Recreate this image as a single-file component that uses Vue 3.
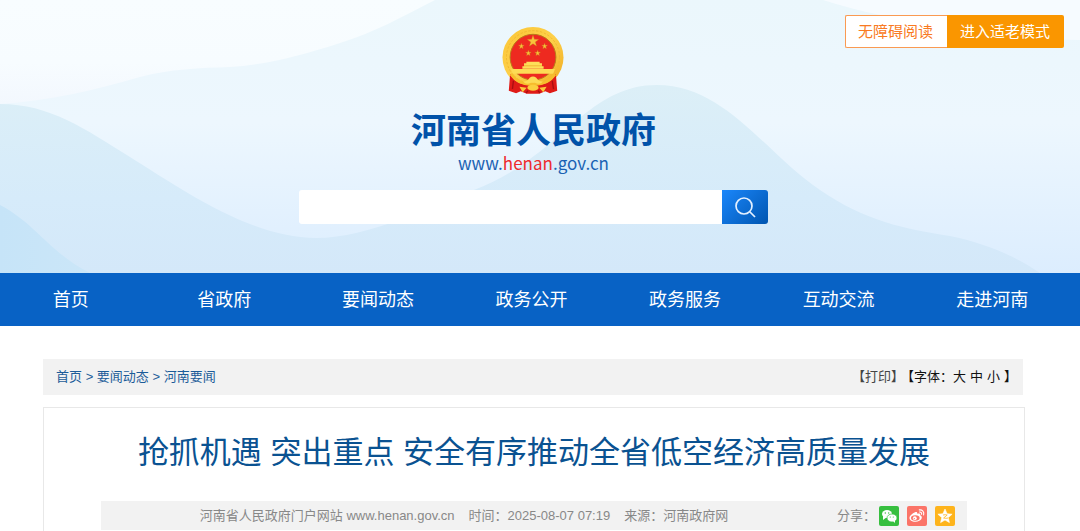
<template>
  <div class="page">
    <header class="hero">
      <svg class="waves" viewBox="0 0 1080 273" preserveAspectRatio="none" aria-hidden="true">
        <defs>
          <linearGradient id="sky" x1="0" y1="0" x2="0" y2="1">
            <stop offset="0" stop-color="#ebf7fc" />
            <stop offset="0.45" stop-color="#edf7fe" />
            <stop offset="1" stop-color="#dcedfe" />
          </linearGradient>
          <linearGradient id="mist" x1="0" y1="0" x2="0" y2="1">
            <stop offset="0" stop-color="#f8fdff" />
            <stop offset="0.6" stop-color="#f7fcff" />
            <stop offset="1" stop-color="#f3f8fe" />
          </linearGradient>
          <linearGradient id="hill" x1="0" y1="0" x2="0" y2="1">
            <stop offset="0" stop-color="#dceff7" />
            <stop offset="0.6" stop-color="#d6ebfa" />
            <stop offset="1" stop-color="#d4e8f9" />
          </linearGradient>
          <linearGradient id="corner" x1="0" y1="0" x2="1" y2="0">
            <stop offset="0" stop-color="#c6e4f8" />
            <stop offset="1" stop-color="#cbe6f8" />
          </linearGradient>
        </defs>
        <rect width="1080" height="273" fill="url(#sky)" />
        <path d="M0 0H435C400 18 375 32 340 43C300 56 265 65 230 67C200 68 170 69 140 77C95 90 50 101 0 104Z" fill="url(#mist)" />
        <path d="M823 0C860 12 900 20 950 26C1000 32 1040 40 1080 40V0Z" fill="#f6fbff" />
        <path d="M0 104C50 104 85 129 130 157C180 188 250 238 316 238C370 238 430 206 474 190C560 158 585 85 657 85C725 85 765 153 820 190C865 221 905 229 950 236C985 243 1015 256 1040 273H0Z" fill="url(#hill)" />
        <path d="M0 205C35 223 50 253 90 273H0Z" fill="url(#corner)" />
      </svg>

      <div class="modes">
        <button type="button" class="mode mode-plain">无障碍阅读</button>
        <button type="button" class="mode mode-elder">进入适老模式</button>
      </div>

      <div class="brand">
        <svg class="emblem" viewBox="0 0 186 202" aria-hidden="true">
          <defs>
            <linearGradient id="gold" x1="0" y1="0" x2="1" y2="1">
              <stop offset="0" stop-color="#fbc636" />
              <stop offset="0.5" stop-color="#fdd04a" />
              <stop offset="1" stop-color="#efa91f" />
            </linearGradient>
          </defs>
          <circle cx="93" cy="92" r="92" fill="url(#gold)" />
          <circle cx="93" cy="91" r="80" fill="none" stroke="#f0b72f" stroke-width="3" stroke-dasharray="7 5" />
          <circle cx="93" cy="91" r="69" fill="#ee2a20" stroke="#b97a18" stroke-width="3" />
          <polygon v-for="(s, i) in stars" :key="i" :points="starPoints(s)" fill="#f8c33b" stroke="#c8891e" stroke-width="1" />
          <path d="M66 109h7v-4h40v4h7v9h5v8H61v-8h5z" fill="#fddf59" />
          <path d="M66 117h54" stroke="#e9a622" stroke-width="2" />
          <path d="M27 127h132l-5 14H32z" fill="#fddb55" />
          <path d="M24 142c18 32 42 33 69 33s51-1 69-33l4 50-22 8-14-6-18 7H74l-18-7-14 6-22-8z" fill="#df1b17" />
          <path d="M27 143q22 31 66 31t66-31" fill="none" stroke="#f7bd2d" stroke-width="9" />
          <path d="M63 164q14 1 20-11 10-7 20 0 6 12 20 11-9 12-24 4h-12q-15 8-24-4z" fill="#fddb55" />
          <ellipse cx="93" cy="183" rx="17" ry="9" fill="#fbcf3f" />
          <path d="M52 180l22 3-12 14zM134 180l-22 3 12 14z" fill="#fbc83b" />
          <path d="M34 162l-3 25M151 162l4 25M78 192l-6 7M108 192l6 7" stroke="#a80e12" stroke-width="4" />
        </svg>
        <h1 class="site-name">河南省人民政府</h1>
        <a href="#" class="site-url">www.<em>henan</em>.gov.cn</a>
      </div>

      <form class="search" @submit.prevent>
        <input v-model="keyword" type="text" aria-label="搜索" />
        <button type="submit" aria-label="搜索">
          <svg viewBox="0 0 24 24" aria-hidden="true">
            <circle cx="11" cy="11" r="8" />
            <path d="M17 17l5 5" />
          </svg>
        </button>
      </form>
    </header>

    <nav class="nav">
      <div class="nav-list">
        <a v-for="item in navItems" :key="item" href="#">{{ item }}</a>
      </div>
    </nav>

    <main class="container">
      <div class="crumb-bar">
        <div class="crumbs">
          <template v-for="(item, i) in crumbs" :key="item">
            <span v-if="i > 0"> &gt; </span>
            <a href="#">{{ item }}</a>
          </template>
        </div>
        <div class="tools">
          <button type="button" class="print">【打印】</button>
          <span>【字体：</span>
          <span class="sizes">
            <button v-for="size in ['大', '中', '小']" :key="size" type="button">{{ size }}</button>
          </span>
          <span>】</span>
        </div>
      </div>

      <article class="article">
        <h2>抢抓机遇 突出重点 安全有序推动全省低空经济高质量发展</h2>
        <div class="info">
          <div class="meta">
            <span>河南省人民政府门户网站 www.henan.gov.cn</span>
            <span>时间：2025-08-07 07:19</span>
            <span>来源：河南政府网</span>
          </div>
          <div class="share">
            <span class="share-label">分享：</span>
            <a href="#" class="wechat" aria-label="微信">
              <svg viewBox="0 0 20 20">
                <ellipse cx="8" cy="8" rx="5" ry="4" fill="#fff" />
                <path d="M4 10l0 4 4-3z" fill="#fff" />
                <ellipse cx="13" cy="12" rx="5" ry="4" fill="#fff" stroke="#37bf3f" stroke-width="0.7" />
                <path d="M14 15l2 2v-3z" fill="#fff" />
                <g fill="#37bf3f">
                  <circle cx="6.3" cy="7" r="0.7" />
                  <circle cx="9.7" cy="7" r="0.7" />
                  <circle cx="11.3" cy="11" r="0.6" />
                  <circle cx="14.3" cy="11" r="0.6" />
                </g>
              </svg>
            </a>
            <a href="#" class="weibo" aria-label="微博">
              <svg viewBox="0 0 20 20">
                <path d="M8 6.3c1.6-.8 2.6-.1 2.1 1.5 2-.8 3.6-.3 3.1 1.4 3.3 1.3 1.5 6.3-4.7 6.5-3.6.1-6-1.5-6-3.7C2.5 9.8 5.5 7.3 8 6.3z" fill="#fff" />
                <ellipse cx="8.3" cy="12" rx="4.3" ry="2.7" fill="#fb7468" />
                <circle cx="7.8" cy="12.2" r="1.9" fill="#fff" />
                <circle cx="7.3" cy="12.6" r="0.7" fill="#fb7468" />
                <path d="M12.3 3.9c3-.5 5.2 2.1 4.3 5M12.5 6c1.5-.2 2.5 1 2.1 2.3" fill="none" stroke="#fff" stroke-width="1.1" stroke-linecap="round" />
              </svg>
            </a>
            <a href="#" class="qzone" aria-label="QQ空间">
              <svg viewBox="0 0 20 20">
                <path d="M10 3l2.1 4.7 5 .5-3.8 3.4 1.1 5L10 14l-4.4 2.6 1.1-5-3.8-3.4 5-.5z" fill="#fff" stroke="#fff" stroke-width="0.6" stroke-linejoin="round" />
                <path d="M8 9q2.5-.6 4.2 0l-3.6 3q2.2.6 4.7 0" fill="none" stroke="#feb41c" stroke-width="0.8" />
              </svg>
            </a>
          </div>
        </div>
      </article>
    </main>
  </div>
</template>

<script setup>
import { ref } from 'vue'

const keyword = ref('')

const navItems = ['首页', '省政府', '要闻动态', '政务公开', '政务服务', '互动交流', '走进河南']
const crumbs = ['首页', '要闻动态', '河南要闻']

const stars = [
  { x: 93, y: 43, r: 18 },
  { x: 58, y: 58, r: 9 },
  { x: 128, y: 58, r: 9 },
  { x: 79, y: 79, r: 9 },
  { x: 107, y: 79, r: 9 }
]

const starPoints = ({ x, y, r }) =>
  Array.from({ length: 10 }, (_, i) => {
    const radius = i % 2 ? r * 0.4 : r
    const angle = (i * Math.PI) / 5 - Math.PI / 2
    return `${x + radius * Math.cos(angle)},${y + radius * Math.sin(angle)}`
  }).join(' ')
</script>

<style>
body {
  margin: 0;
  background: #fff;
}
</style>

<style scoped>
.page {
  font-family: 'Liberation Sans', 'Noto Sans CJK SC', sans-serif;
  font-size: 13px;
  color: #333;
}

a {
  color: inherit;
  text-decoration: none;
}

button {
  padding: 0;
  border: 0;
  background: none;
  color: inherit;
  font: inherit;
  cursor: pointer;
}

/* 头部 */
.hero {
  position: relative;
  box-sizing: border-box;
  min-height: 273px;
  padding: 27px 13px 48px 0;
  display: flex;
  flex-direction: column;
  align-items: center;
}

.waves {
  position: absolute;
  inset: 0;
  width: 100%;
  height: 100%;
}

.modes {
  position: absolute;
  top: 15px;
  right: 16px;
  display: flex;
  font-size: 15px;
  line-height: 31px;
}

.mode {
  height: 33px;
}

.mode-plain {
  padding: 0 14px 0 12px;
  border: 1px solid #fa9a52;
  border-right: 0;
  border-radius: 2px 0 0 2px;
  background: #fff;
  color: #f97a22;
}

.mode-elder {
  padding: 0 14px 0 13px;
  border-radius: 0 2px 2px 0;
  background: #fa9600;
  color: #fff;
}

.brand {
  position: relative;
  display: flex;
  flex-direction: column;
  align-items: center;
}

.emblem {
  width: 62px;
  height: 67px;
}

.site-name {
  margin: 8px 0 0;
  color: #0052a9;
  font-family: 'Noto Sans CJK SC', sans-serif;
  font-size: 35px;
  font-weight: 700;
  line-height: 52px;
}

.site-url {
  color: #1a62b3;
  font-family: 'Noto Sans CJK SC', sans-serif;
  font-size: 17px;
  line-height: 18px;
}

.site-url em {
  color: #ee2b2f;
  font-style: normal;
}

.search {
  position: relative;
  display: flex;
  width: 469px;
  max-width: 90%;
  height: 34px;
  margin-top: 18px;
}

.search input {
  flex: 1;
  min-width: 0;
  padding: 0 12px;
  border: 0;
  border-radius: 3px 0 0 3px;
  outline: 0;
  background: #fff;
  font: inherit;
}

.search button {
  display: flex;
  align-items: center;
  justify-content: center;
  width: 46px;
  border-radius: 0 3px 3px 0;
  background: linear-gradient(135deg, #1b87fb, #0055b0);
}

.search svg {
  width: 24px;
  height: 24px;
  fill: none;
  stroke: #e4f0ff;
  stroke-width: 1.7;
}

/* 导航 */
.nav {
  background: #0862c5;
  overflow: hidden;
}

.nav-list {
  display: grid;
  grid-template-columns: repeat(7, 1fr);
  margin: 0 11px 0 -6px;
  padding-top: 2px;
  color: #fff;
  font-size: 18px;
  line-height: 51px;
  text-align: center;
}

/* 正文 */
.container {
  box-sizing: border-box;
  max-width: 1067px;
  margin: 0 13px 0 0;
  padding: 33px 42px 0 43px;
}

@media (min-width: 1100px) {
  .container {
    margin: 0 auto;
  }
}

.crumb-bar {
  display: flex;
  justify-content: space-between;
  margin-right: 2px;
  padding: 0 6px 0 13px;
  background: #f2f2f2;
  line-height: 36px;
}

.crumbs {
  color: #1c5c99;
  white-space: pre;
}

.tools {
  display: flex;
  color: #111;
}

.print {
  margin-right: -3px;
  color: #444;
}

.sizes {
  display: flex;
  gap: 4px;
  padding-right: 4px;
}

.article {
  margin-top: 12px;
  padding: 21px 57px 1px;
  border: 1px solid #e8e8e8;
  border-bottom: 0;
}

.article h2 {
  margin: 0;
  color: #0a5291;
  font-size: 31px;
  font-weight: 400;
  line-height: 48px;
  text-align: center;
}

.info {
  display: flex;
  align-items: center;
  margin: 24px 0 0;
  padding: 0 12px;
  background: #f2f2f2;
  color: #888;
  line-height: 29px;
}

.meta {
  display: flex;
  flex: 1;
  justify-content: center;
  gap: 14px;
  padding-right: 22px;
}

.share {
  display: flex;
  align-items: center;
  gap: 8px;
}

.share-label {
  margin-right: -5px;
}

.share a {
  width: 20px;
  height: 20px;
  border-radius: 2px;
}

.share svg {
  display: block;
}

.wechat {
  background: #37bf3f;
}

.weibo {
  background: #fb7468;
}

.qzone {
  background: #feb41c;
}
</style>
